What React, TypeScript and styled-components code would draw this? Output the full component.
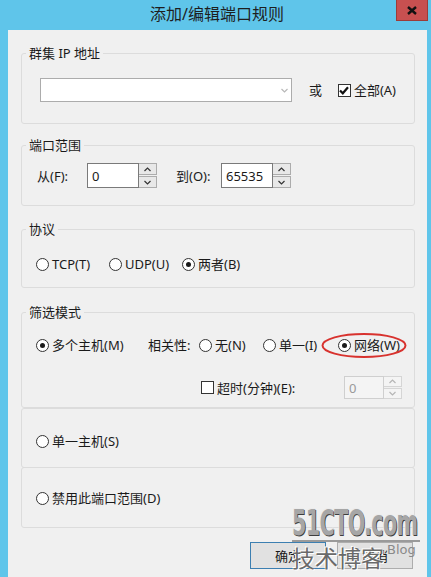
import styled, { createGlobalStyle } from 'styled-components';

const GlobalStyle = createGlobalStyle`
  html, body {
    margin: 0;
    padding: 0;
  }
  body {
    background: #5fc5ea;
    font-family: "Noto Sans", "Noto Sans CJK SC", sans-serif;
    color: #1a1a1a;
  }
`;

const Window = styled.div`
  position: relative;
  width: 431px;
  height: 577px;
  background: #5fc5ea;
  display: flex;
  flex-direction: column;
  overflow: hidden;
`;

const TitleBar = styled.div`
  flex: none;
  height: 30px;
  display: grid;
  grid-template-columns: 1fr auto 1fr;
`;

const Title = styled.div`
  grid-column: 2;
  padding-left: 3px;
  font-size: 16px;
  line-height: 29px;
  color: #1e1e1e;
`;

const CloseButton = styled.div`
  grid-column: 3;
  justify-self: end;
  margin-right: 3px;
  width: 32px;
  height: 21px;
  box-sizing: border-box;
  background: #c75050;
  border: 1px solid #9c3c38;
  border-top: 0;
  display: flex;
  align-items: center;
  justify-content: center;
`;

const Client = styled.div`
  flex: 1;
  margin: 0 4px 0 8px;
  padding: 15px 12px 0 13px;
  background: #f0f0f0;
  display: flex;
  flex-direction: column;
`;

const Group = styled.fieldset<{ $gap?: number }>`
  margin: ${({ $gap }) => $gap ?? 0}px 0 0;
  padding: 0;
  min-width: 0;
  border: 1px solid #dcdcdc;
  border-radius: 3px;
`;

const Legend = styled.legend`
  margin-left: 4px;
  padding: 0 3px;
  font-size: 13px;
  line-height: 16px;
`;

const Body = styled.div<{ $pad: string }>`
  padding: ${({ $pad }) => $pad};
  display: flex;
  flex-direction: column;
`;

const Panel = styled.div<{ $height: number; $top: number }>`
  box-sizing: border-box;
  height: ${({ $height }) => $height}px;
  padding: ${({ $top }) => $top}px 0 0 14px;
  border: 1px solid #dcdcdc;
  border-radius: 3px;
  & + & {
    margin-top: -1px;
  }
`;

const Row = styled.div<{ $height?: number; $gap?: number; $indent?: number }>`
  display: flex;
  align-items: center;
  height: ${({ $height }) => $height ?? 16}px;
  margin-top: ${({ $gap }) => $gap ?? 0}px;
  padding-left: ${({ $indent }) => $indent ?? 0}px;
  font-size: 13px;
  line-height: 16px;
`;

const Text = styled.span<{ $width?: number; $lead?: number }>`
  flex: none;
  box-sizing: border-box;
  width: ${({ $width }) => ($width ? `${$width}px` : 'auto')};
  padding-left: ${({ $lead }) => $lead ?? 0}px;
  white-space: nowrap;
`;

const Combo = styled.div`
  box-sizing: border-box;
  width: 253px;
  height: 24px;
  border: 1px solid #acacac;
  background: #fff;
  display: flex;
  align-items: center;
  justify-content: flex-end;
  padding-right: 3px;
  margin-right: 17px;
`;

const Option = styled.label<{ $width?: number }>`
  position: relative;
  flex: none;
  display: inline-flex;
  align-items: center;
  gap: 3px;
  width: ${({ $width }) => ($width ? `${$width}px` : 'auto')};
  white-space: nowrap;
`;

const Radio = styled.span<{ $on?: boolean }>`
  position: relative;
  flex: none;
  box-sizing: border-box;
  width: 13px;
  height: 13px;
  border: 1px solid #333;
  border-radius: 50%;
  background: #fff;

  &::after {
    content: '';
    display: ${({ $on }) => ($on ? 'block' : 'none')};
    position: absolute;
    inset: 3px;
    border-radius: 50%;
    background: #1a1a1a;
  }
`;

const Check = styled.span`
  flex: none;
  box-sizing: border-box;
  width: 13px;
  height: 13px;
  border: 1px solid #333;
  background: #fff;
  display: flex;
  align-items: center;
  justify-content: center;
`;

const Spin = styled.div<{ $height: number; $left?: string }>`
  flex: none;
  display: flex;
  height: ${({ $height }) => $height}px;
  margin-left: ${({ $left }) => $left ?? '0'};
`;

const SpinInput = styled.div<{ $width: number; $disabled?: boolean }>`
  box-sizing: border-box;
  width: ${({ $width }) => $width}px;
  padding-left: 4px;
  border: 1px solid ${({ $disabled }) => ($disabled ? '#cfcfcf' : '#7a7a7a')};
  background: ${({ $disabled }) => ($disabled ? '#f4f4f4' : '#fff')};
  color: ${({ $disabled }) => ($disabled ? '#9a9a9a' : '#1a1a1a')};
  display: flex;
  align-items: center;
  font-size: 13px;
`;

const SpinButtons = styled.div`
  box-sizing: border-box;
  width: 18px;
  display: flex;
  flex-direction: column;
  gap: 1px;
`;

const SpinButton = styled.div<{ $disabled?: boolean }>`
  flex: 1;
  box-sizing: border-box;
  border: 1px solid ${({ $disabled }) => ($disabled ? '#d5d5d5' : '#acacac')};
  border-left: 0;
  background: ${({ $disabled }) => ($disabled ? '#f4f4f4' : '#e8e8e8')};
  display: flex;
  align-items: center;
  justify-content: center;
`;

const Ring = styled.svg`
  position: absolute;
  left: -18px;
  top: -5px;
  pointer-events: none;
`;

const Footer = styled.div`
  display: flex;
  justify-content: flex-end;
  gap: 11px;
  margin-top: 14px;
  padding-right: 2px;
`;

const Button = styled.button<{ $primary?: boolean }>`
  width: 76px;
  height: 27px;
  padding: 0;
  border: 1px solid ${({ $primary }) => ($primary ? '#3c7fb1' : '#adadad')};
  background: #e1e1e1;
  font-family: "Noto Sans CJK SC", sans-serif;
  font-size: 13px;
  color: #1a1a1a;
`;

const Watermark = styled.div`
  position: absolute;
  left: 292px;
  top: 506px;
  width: 128px;
  pointer-events: none;
`;

const MarkBrand = styled.div`
  width: 200px;
  font-family: "DejaVu Sans Condensed", "DejaVu Sans", sans-serif;
  font-weight: bold;
  font-size: 36px;
  line-height: 34px;
  letter-spacing: -1px;
  color: #a6a6a6;
  text-shadow: 1px 1px 0 #3e3e3e, -1px -1px 0 #ececec;
  transform: scaleX(0.64);
  transform-origin: left center;
  white-space: nowrap;
  border-bottom: 2px solid #9a9a9a;
`;

const MarkLine = styled.div`
  display: flex;
  align-items: flex-start;
  margin-top: 1px;
`;

const MarkCn = styled.span`
  font-family: "Noto Sans CJK SC", sans-serif;
  font-size: 23px;
  line-height: 28px;
  color: #6a6a6a;
  text-shadow: 1px 1px 0 #fff, -1px -1px 0 #fff;
`;

const MarkBlog = styled.span`
  margin-left: 3px;
  font-family: "DejaVu Sans", sans-serif;
  font-size: 13px;
  line-height: 14px;
  color: #8a8a8a;
`;

const Chevron = ({ up, color = '#333' }: { up?: boolean; color?: string }) => (
  <svg width="7" height="5" viewBox="0 0 7 5">
    <polyline
      points={up ? '0.5,4 3.5,1 6.5,4' : '0.5,1 3.5,4 6.5,1'}
      fill="none"
      stroke={color}
      strokeWidth="1.2"
    />
  </svg>
);

const Spinner = ({ width, height, value, left, disabled }: { width: number; height: number; value: string; left?: string; disabled?: boolean }) => (
  <Spin $height={height} $left={left}>
    <SpinInput $width={width} $disabled={disabled}>{value}</SpinInput>
    <SpinButtons>
      <SpinButton $disabled={disabled}>
        <Chevron up color={disabled ? '#b5b5b5' : '#333'} />
      </SpinButton>
      <SpinButton $disabled={disabled}>
        <Chevron color={disabled ? '#b5b5b5' : '#333'} />
      </SpinButton>
    </SpinButtons>
  </Spin>
);

export default function App() {
  return (
    <>
      <GlobalStyle />
      <Window>
        <TitleBar>
          <Title>添加/编辑端口规则</Title>
          <CloseButton>
            <svg width="10" height="9" viewBox="0 0 10 9">
              <path d="M1 1 L9 8 M9 1 L1 8" stroke="#111" strokeWidth="2.4" />
            </svg>
          </CloseButton>
        </TitleBar>

        <Client>
          <Group>
            <Legend>群集 IP 地址</Legend>
            <Body $pad="17px 18px 21px">
              <Row $height={24}>
                <Combo>
                  <Chevron color="#b8b8b8" />
                </Combo>
                <Text $width={29}>或</Text>
                <Option>
                  <Check>
                    <svg width="10" height="9" viewBox="0 0 10 9">
                      <polyline points="1,4.5 3.8,7.3 9,1.2" fill="none" stroke="#111" strokeWidth="2.2" />
                    </svg>
                  </Check>
                  全部(A)
                </Option>
              </Row>
            </Body>
          </Group>

          <Group $gap={13}>
            <Legend>端口范围</Legend>
            <Body $pad="10px 15px 17px">
              <Row $height={25}>
                <Text $width={50}>从(F):</Text>
                <Spinner width={52} height={25} value="0" />
                <Text $width={64} $lead={19}>到(O):</Text>
                <Spinner width={52} height={25} value="65535" />
              </Row>
            </Body>
          </Group>

          <Group $gap={15}>
            <Legend>协议</Legend>
            <Body $pad="19px 14px 15px">
              <Row>
                <Option $width={73}>
                  <Radio />
                  TCP(T)
                </Option>
                <Option $width={73}>
                  <Radio />
                  UDP(U)
                </Option>
                <Option>
                  <Radio $on />
                  两者(B)
                </Option>
              </Row>
            </Body>
          </Group>

          <Group $gap={16}>
            <Legend>筛选模式</Legend>
            <Body $pad="15px 12px 8px 14px">
              <Row $height={20}>
                <Option $width={112}>
                  <Radio $on />
                  多个主机(M)
                </Option>
                <Text $width={51}>相关性:</Text>
                <Option $width={64}>
                  <Radio />
                  无(N)
                </Option>
                <Option $width={75}>
                  <Radio />
                  单一(I)
                </Option>
                <Option>
                  <Radio $on />
                  网络(W)
                  <Ring width="88" height="27" viewBox="0 0 88 27">
                    <ellipse cx="44" cy="13.5" rx="41.5" ry="11.5" fill="none" stroke="#d8322e" strokeWidth="2" />
                  </Ring>
                </Option>
              </Row>
              <Row $height={23} $gap={21} $indent={165}>
                <Option>
                  <Check />
                  超时(分钟)(E):
                </Option>
                <Spinner width={40} height={23} value="0" left="auto" disabled />
              </Row>
            </Body>
          </Group>

          <Panel $height={60} $top={24}>
            <Row>
              <Option>
                <Radio />
                单一主机(S)
              </Option>
            </Row>
          </Panel>
          <Panel $height={61} $top={22}>
            <Row>
              <Option>
                <Radio />
                禁用此端口范围(D)
              </Option>
            </Row>
          </Panel>

          <Footer>
            <Button $primary>确定</Button>
            <Button>取消</Button>
          </Footer>
        </Client>

        <Watermark>
          <MarkBrand>51CTO.com</MarkBrand>
          <MarkLine>
            <MarkCn>技术博客</MarkCn>
            <MarkBlog>Blog</MarkBlog>
          </MarkLine>
        </Watermark>
      </Window>
    </>
  );
}
